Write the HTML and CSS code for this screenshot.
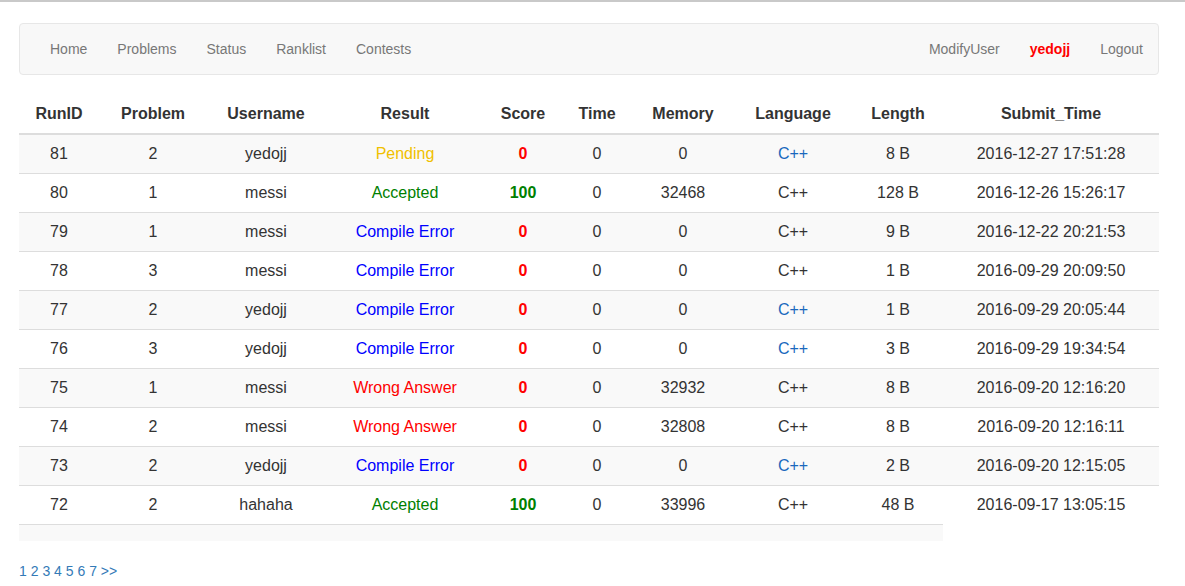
FILE: index.html
```html
<!DOCTYPE html>
<html>
<head>
<meta charset="utf-8">
<link rel="stylesheet" href="styles.css">
</head>
<body>
<div class="topline"></div>
<div class="container">
  <nav class="navbar">
    <ul class="nav">
      <li><a href="#">Home</a></li>
      <li><a href="#">Problems</a></li>
      <li><a href="#">Status</a></li>
      <li><a href="#">Ranklist</a></li>
      <li><a href="#">Contests</a></li>
    </ul>
    <ul class="nav nav-right">
      <li><a href="#">ModifyUser</a></li>
      <li><a href="#" class="me">yedojj</a></li>
      <li><a href="#">Logout</a></li>
    </ul>
  </nav>
  <table class="status">
    <colgroup>
      <col class="c1"><col class="c2"><col class="c3"><col class="c4"><col class="c5">
      <col class="c6"><col class="c7"><col class="c8"><col class="c9"><col class="c10">
    </colgroup>
    <thead>
      <tr><th>RunID</th><th>Problem</th><th>Username</th><th>Result</th><th>Score</th><th>Time</th><th>Memory</th><th>Language</th><th>Length</th><th>Submit_Time</th></tr>
    </thead>
    <tbody>
      <tr><td>81</td><td>2</td><td>yedojj</td><td class="pe">Pending</td><td class="sc bad">0</td><td>0</td><td>0</td><td><a href="#">C++</a></td><td>8 B</td><td>2016-12-27 17:51:28</td></tr>
      <tr><td>80</td><td>1</td><td>messi</td><td class="ac">Accepted</td><td class="sc good">100</td><td>0</td><td>32468</td><td>C++</td><td>128 B</td><td>2016-12-26 15:26:17</td></tr>
      <tr><td>79</td><td>1</td><td>messi</td><td class="ce">Compile Error</td><td class="sc bad">0</td><td>0</td><td>0</td><td>C++</td><td>9 B</td><td>2016-12-22 20:21:53</td></tr>
      <tr><td>78</td><td>3</td><td>messi</td><td class="ce">Compile Error</td><td class="sc bad">0</td><td>0</td><td>0</td><td>C++</td><td>1 B</td><td>2016-09-29 20:09:50</td></tr>
      <tr><td>77</td><td>2</td><td>yedojj</td><td class="ce">Compile Error</td><td class="sc bad">0</td><td>0</td><td>0</td><td><a href="#">C++</a></td><td>1 B</td><td>2016-09-29 20:05:44</td></tr>
      <tr><td>76</td><td>3</td><td>yedojj</td><td class="ce">Compile Error</td><td class="sc bad">0</td><td>0</td><td>0</td><td><a href="#">C++</a></td><td>3 B</td><td>2016-09-29 19:34:54</td></tr>
      <tr><td>75</td><td>1</td><td>messi</td><td class="wa">Wrong Answer</td><td class="sc bad">0</td><td>0</td><td>32932</td><td>C++</td><td>8 B</td><td>2016-09-20 12:16:20</td></tr>
      <tr><td>74</td><td>2</td><td>messi</td><td class="wa">Wrong Answer</td><td class="sc bad">0</td><td>0</td><td>32808</td><td>C++</td><td>8 B</td><td>2016-09-20 12:16:11</td></tr>
      <tr><td>73</td><td>2</td><td>yedojj</td><td class="ce">Compile Error</td><td class="sc bad">0</td><td>0</td><td>0</td><td><a href="#">C++</a></td><td>2 B</td><td>2016-09-20 12:15:05</td></tr>
      <tr><td>72</td><td>2</td><td>hahaha</td><td class="ac">Accepted</td><td class="sc good">100</td><td>0</td><td>33996</td><td>C++</td><td>48 B</td><td>2016-09-17 13:05:15</td></tr>
      <tr class="empty"><td></td><td></td><td></td><td></td><td></td><td></td><td></td><td></td><td></td></tr>
    </tbody>
  </table>
  <div class="pager">
    <a href="#">1</a> <a href="#">2</a> <a href="#">3</a> <a href="#">4</a> <a href="#">5</a> <a href="#">6</a> <a href="#">7</a> <a href="#">&gt;&gt;</a>
  </div>
</div>
</body>
</html>
```

FILE: styles.css
```css
* { box-sizing: border-box; }
html, body {
  margin: 0;
  padding: 0;
  background: #fff;
  font-family: "Liberation Sans", Arial, sans-serif;
  font-size: 14px;
  line-height: 20px;
  color: #333;
}
.topline {
  height: 2px;
  background: #c9c9c9;
}
.container {
  width: 1140px;
  margin-left: 19px;
  padding-top: 21px;
}
.navbar {
  display: flex;
  justify-content: space-between;
  height: 52px;
  background: #f8f8f8;
  border: 1px solid #e7e7e7;
  border-radius: 4px;
  padding: 0 0 0 15px;
  margin-bottom: 20px;
}
.nav {
  display: flex;
  list-style: none;
  margin: 0;
  padding: 0;
}
.nav a {
  display: block;
  padding: 15px;
  color: #777;
  text-decoration: none;
}
.nav a.me {
  color: #ff0000;
  font-weight: bold;
}
.status {
  width: 1140px;
  border-collapse: collapse;
  border-spacing: 0;
  table-layout: fixed;
  font-size: 16px;
  line-height: 22px;
  margin-bottom: 20px;
}
.c1 { width: 80px; }
.c2 { width: 108px; }
.c3 { width: 118px; }
.c4 { width: 160px; }
.c5 { width: 76px; }
.c6 { width: 72px; }
.c7 { width: 100px; }
.c8 { width: 120px; }
.c9 { width: 90px; }
.c10 { width: 216px; }
.status th {
  font-weight: bold;
  text-align: center;
  padding: 8px;
  border-bottom: 2px solid #ddd;
}
.status td {
  text-align: center;
  padding: 8px;
  border-top: 1px solid #ddd;
  white-space: nowrap;
}
.status tbody tr:first-child td { border-top: 0; }
.status tbody tr:nth-child(odd) td { background: #f9f9f9; }
.status td a { color: #1a68bd; text-decoration: none; }
.pe { color: #f0c000; }
.ac { color: #008000; }
.ce { color: #0000ff; }
.wa { color: #ff0000; }
.sc { font-weight: bold; }
.bad { color: #ff0000; }
.good { color: #008000; }
.pager a {
  color: #337ab7;
  text-decoration: none;
}
```
